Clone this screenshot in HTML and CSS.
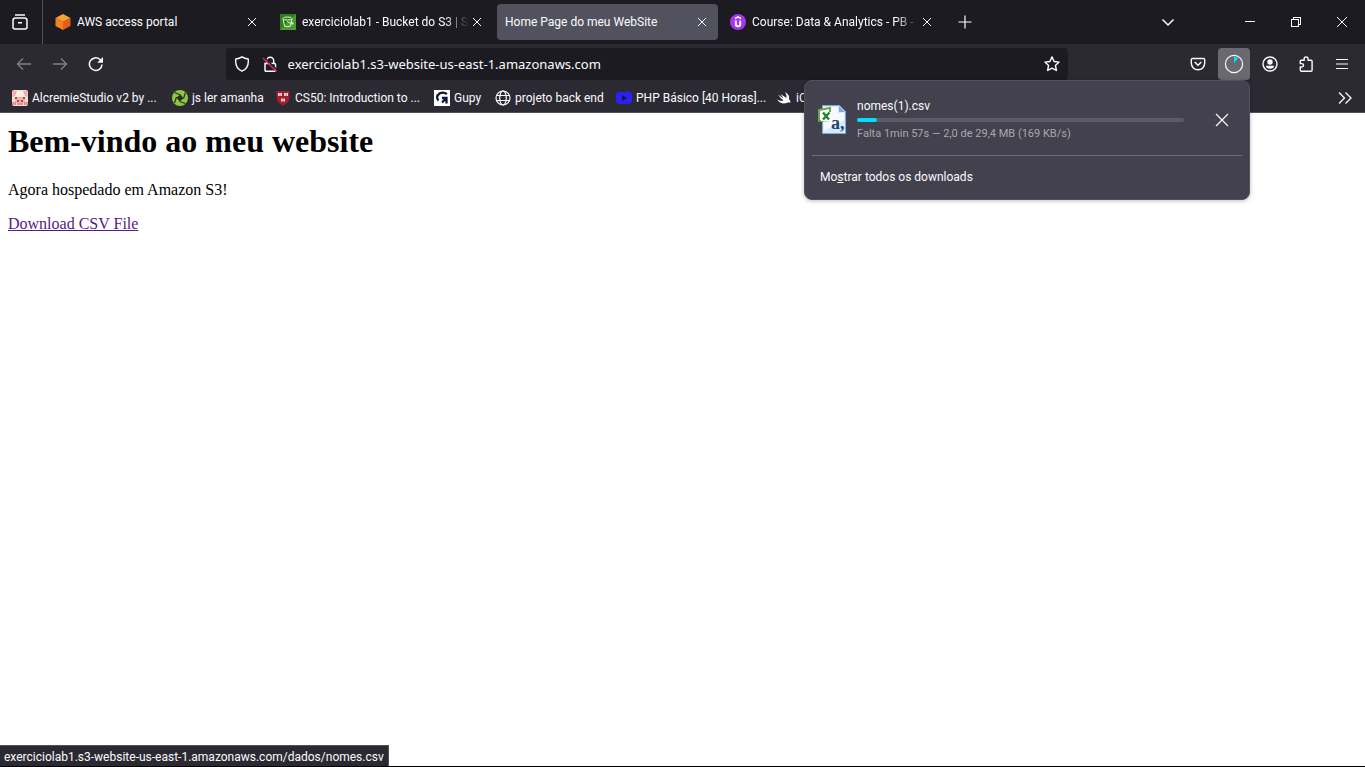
FILE: index.html
```html
<!DOCTYPE html>
<html lang="pt-BR">
<head>
<meta charset="utf-8">
<title>Home Page do meu WebSite</title>
<link rel="stylesheet" href="styles.css">
</head>
<body>
<header class="browser">
  <div class="tabstrip">
    <button class="view-button" aria-label="Firefox View">
      <svg class="icon" width="16" height="16" viewBox="0 0 16 16"><path stroke-width="1.500" d="M3 1h10M3.500 4h9q2.500 0 2.500 2.500V13q0 2-2 2H3q-2 0-2-2V6.500Q1 4 3.500 4zM6 8.700h4"/></svg>
    </button>
    <div class="tabs">
      <div class="tab">
        <button class="tab-label">
          <svg class="favicon" width="16" height="16" viewBox="0 0 16 16"><path fill="#f9a12b" d="m8 0 7.500 4L8 8 .5 4z"/><path fill="#f58220" d="M.5 4 8 8v8L.5 12z"/><path fill="#e65f19" d="M15.500 4 8 8v8l7.500-4z"/></svg>
          <span class="tab-title">AWS access portal</span>
        </button>
        <button class="close" aria-label="Fechar aba"><svg class="icon thin" width="10" height="10" viewBox="0 0 10 10"><path d="m1 1 8 8M9 1 1 9"/></svg></button>
      </div>
      <div class="tab">
        <button class="tab-label">
          <svg class="favicon" width="16" height="16" viewBox="0 0 16 16"><path fill="#2f7d1d" d="M0 0h16v16H0z"/><path fill="#4b9b2c" d="M16 0v16H0z"/><g fill="none" stroke="#e4f3da"><ellipse cx="7.500" cy="4.500" rx="4.500" ry="1.500"/><path d="m3 5 1.500 7q3 1.500 6 0L12 5M7 7.500l5 2.500q2 .5 1-1l-2-1"/></g></svg>
          <span class="tab-title faded">exerciciolab1 - Bucket do S3 | S3</span>
        </button>
        <button class="close" aria-label="Fechar aba"><svg class="icon thin" width="10" height="10" viewBox="0 0 10 10"><path d="m1 1 8 8M9 1 1 9"/></svg></button>
      </div>
      <div class="tab selected">
        <button class="tab-label"><span class="tab-title">Home Page do meu WebSite</span></button>
        <button class="close" aria-label="Fechar aba"><svg class="icon thin" width="10" height="10" viewBox="0 0 10 10"><path d="m1 1 8 8M9 1 1 9"/></svg></button>
      </div>
      <div class="tab">
        <button class="tab-label">
          <svg class="favicon" width="16" height="16" viewBox="0 0 16 16"><circle cx="8" cy="8" r="8" fill="#a435f0"/><path d="M5.800 6.500v4q0 1.800 2.200 1.800t2.200-1.800v-4" fill="none" stroke="#fff" stroke-width="1.900"/><path d="m5 4.700 3-1.800 3 1.800" fill="none" stroke="#fff" stroke-width="1.400"/></svg>
          <span class="tab-title faded">Course: Data &amp; Analytics - PB -</span>
        </button>
        <button class="close" aria-label="Fechar aba"><svg class="icon thin" width="10" height="10" viewBox="0 0 10 10"><path d="m1 1 8 8M9 1 1 9"/></svg></button>
      </div>
      <button class="tool new-tab" aria-label="Nova aba"><svg class="icon" width="14" height="14" viewBox="0 0 14 14"><path d="M7 .5v13M.5 7h13"/></svg></button>
    </div>
    <button class="tool list-tabs" aria-label="Listar abas"><svg class="icon" width="14" height="14" viewBox="0 0 14 14"><path stroke-width="1.500" d="m1.500 4.500 5.500 5.500 5.500-5.500"/></svg></button>
    <div class="window-buttons">
      <button class="window-button" aria-label="Minimizar"><svg class="icon crisp" width="10" height="10" viewBox="0 0 10 10"><path d="M0 4.500h10"/></svg></button>
      <button class="window-button" aria-label="Restaurar"><svg class="icon crisp" width="10" height="10" viewBox="0 0 10 10"><path d="M.5 2.500h7v7h-7zM2.500 2V.5h7v7H8"/></svg></button>
      <button class="window-button" aria-label="Fechar"><svg class="icon thin" width="10" height="10" viewBox="0 0 10 10"><path d="m0 0 10 10M10 0 0 10"/></svg></button>
    </div>
  </div>

  <div class="toolbar">
    <div class="nav">
      <button class="tool" aria-label="Voltar" disabled><svg class="icon" width="16" height="16" viewBox="0 0 16 16"><path stroke-width="1.400" d="M15 8H1.500M7 2.500 1.500 8 7 13.500"/></svg></button>
      <button class="tool" aria-label="Avançar" disabled><svg class="icon" width="16" height="16" viewBox="0 0 16 16"><path stroke-width="1.400" d="M1 8h13.500M9 2.500 14.500 8 9 13.500"/></svg></button>
      <button class="tool" aria-label="Recarregar"><svg class="icon" width="16" height="16" viewBox="0 0 16 16"><path stroke-width="1.500" d="M14 8.500a6.300 6.300 0 1 1-2-5l2 2"/><path fill="#fbfbfe" stroke="none" d="M15 1v5.800H9.200z"/></svg></button>
    </div>
    <div class="spring"></div>
    <div class="urlbar">
      <button class="url-icon" aria-label="Proteção"><svg class="icon" width="16" height="16" viewBox="0 0 16 16"><path stroke-width="1.400" d="M8 .8Q10.500 2.500 14.200 3c.6 5-1 10-6.200 12.200C2.800 13 1.200 8 1.800 3Q5.500 2.500 8 .8z"/></svg></button>
      <button class="url-icon" aria-label="Conexão não segura"><svg class="icon" width="16" height="16" viewBox="0 0 16 16"><path stroke-width="1.500" d="M4.700 7.500V4.700a3.500 3.500 0 0 1 7 0v2.800M3 7.500h9.500q1 0 1 1v5.800q0 1-1 1h-8q-1.500 0-1.500-1z"/><path stroke="#1c1b22" stroke-width="1.600" d="m2.500 1.500 13 13"/><path stroke="#e22850" stroke-width="1.500" d="m1 2 13.500 13.500"/></svg></button>
      <input class="url" type="text" aria-label="Endereço" value="exerciciolab1.s3-website-us-east-1.amazonaws.com">
      <button class="url-icon" aria-label="Adicionar aos favoritos"><svg class="icon" width="16" height="16" viewBox="0 0 16 16"><path stroke-width="1.400" stroke-linejoin="round" d="m8 .9 2.100 4.600 5 .6-3.700 3.400 1 5L8 12.100l-4.400 2.400 1-5L.9 6.100l5-.6z"/></svg></button>
    </div>
    <div class="spring"></div>
    <div class="actions">
      <button class="tool" aria-label="Salvar no Pocket"><svg class="icon" width="16" height="16" viewBox="0 0 16 16"><path stroke-width="1.400" d="M2.500 2.500h11q1.200 0 1.200 1.200V7c0 4-3 6.800-6.700 6.800S1.300 11 1.300 7V3.700q0-1.200 1.200-1.200zM4.700 6 8 9.200 11.300 6"/></svg></button>
      <div class="downloads">
        <button class="tool active" aria-label="Downloads"><svg class="icon" width="20" height="20" viewBox="0 0 20 20"><path fill="#00ddff" stroke="none" d="M10 9.500V2.700q2.500 0 4.200 1.300z"/><circle cx="10" cy="10" r="8.600"/></svg></button>
        <section class="panel" aria-label="Downloads">
          <div class="download">
            <svg class="file-icon" width="32" height="32" viewBox="0 0 32 32"><path fill="#d7e9fb" stroke="#7fa8d8" d="M6.500 1.500h17l6 6v22h-23z"/><path fill="#f6faff" d="M7 3h15v6h6v7L8 27z"/><path fill="#7ca8dc" d="m23 2 6 6h-6z"/><text class="file-letter" x="15" y="25">a,</text><path fill="#fff" stroke="#65a852" stroke-width="2" d="m3 6 11-2v12l-11 1z"/><path fill="#fff" d="M5 8h11v9H5z"/><path fill="none" stroke="#24852c" stroke-width="2.500" d="m7 8.500 6 7M13.500 8.500l-6.500 7"/></svg>
            <div class="details">
              <div class="file-name">nomes(1).csv</div>
              <div class="track"><div class="bar" style="width:6%"></div></div>
              <div class="remaining">Falta 1min 57s — 2,0 de 29,4 MB (169 KB/s)</div>
            </div>
            <button class="tool cancel" aria-label="Cancelar download"><svg class="icon" width="14" height="14" viewBox="0 0 14 14"><path d="m1 1 12 12M13 1 1 13"/></svg></button>
          </div>
          <button class="show-all"><span>Mo<u>s</u>trar todos os downloads</span></button>
        </section>
      </div>
      <button class="tool" aria-label="Conta"><svg class="icon" width="16" height="16" viewBox="0 0 16 16"><circle cx="8" cy="8" r="7" stroke-width="1.400"/><g fill="#fbfbfe" stroke="none"><circle cx="8" cy="6" r="2.700"/><path d="M4 9.800h8q0 3-4 3t-4-3z"/></g></svg></button>
      <button class="tool" aria-label="Extensões"><svg class="icon" width="16" height="16" viewBox="0 0 16 16"><path stroke-width="1.400" d="M3.500 15.200q-1.200 0-1.200-1.200v-3h1.500a1.700 1.700 0 0 0 0-3.400H2.300V5q0-.8.800-.8h3V3a2 2 0 0 1 4 0v1.200h3q1 0 1 1V14q0 1.200-1 1.200z"/></svg></button>
      <button class="tool" aria-label="Menu"><svg class="icon" width="14" height="12" viewBox="0 0 14 12"><path d="M1 1.500h12M1 6h12M1 10.500h12"/></svg></button>
    </div>
  </div>

  <nav class="bookmarks" aria-label="Favoritos">
    <a class="bookmark" href="#alcremie"><svg class="favicon" width="16" height="16" viewBox="0 0 16 16"><rect width="16" height="16" rx="2" fill="#f3dfd0"/><path fill="#f6a9b4" d="M1 1h4L3 6 0 7zM11 1h4l1 6-3-1z"/><path fill="#fbf0dc" d="M5 1h6l2 6H3z"/><path fill="#eeb0b0" d="M3 7h10v6H3z"/><path fill="#d8959b" d="M0 12h4v3H0zM12 12h4v3h-4zM5 13h6v2H5z"/><path fill="#b7434e" d="M3 7h2v2H3zM11 7h2v2h-2zM5 10h2v2H5zM9 10h2v2H9z"/></svg><span>AlcremieStudio v2 by ...</span></a>
    <a class="bookmark" href="#js"><svg class="favicon" width="16" height="16" viewBox="0 0 16 16"><circle cx="8" cy="8" r="8" fill="#8fc93a"/><path d="m8.500 4.500 3 4-4 3-3-4z" fill="#2b2a33"/><path d="M2.500 2.500 8.500 5M13.500 2.500l-2 6M13.500 13.500l-6-2M2.500 13l2-6" stroke="#2b2a33" stroke-width="1.200"/></svg><span>js ler amanha</span></a>
    <a class="bookmark" href="#cs50"><svg class="favicon" width="16" height="16" viewBox="0 0 16 16"><path fill="#a51c30" d="M1.500 1h13v6q0 6-6.500 8.500Q1.500 13 1.500 7z"/><path fill="#e8d9dc" d="M3 3h4v3H3zM9 3h4v3H9zM6 8.500h4v3H6z"/><path stroke="#a51c30" stroke-width=".5" d="M5 3v3M11 3v3M8 8v4"/></svg><span>CS50: Introduction to ...</span></a>
    <a class="bookmark" href="#gupy"><svg class="favicon" width="16" height="16" viewBox="0 0 16 16"><path fill="#fff" d="M0 0h16v16H0z"/><path fill="none" stroke="#10172f" stroke-width="2.300" d="M13 4Q9 1.500 5.500 3.500c-3 2-3 5.500-1 7M8 8h4.500v5.500M12.500 8 8 12.500"/></svg><span>Gupy</span></a>
    <a class="bookmark" href="#projeto"><svg class="favicon icon" width="16" height="16" viewBox="0 0 16 16"><circle cx="8" cy="8" r="7"/><ellipse cx="8" cy="8" rx="3.300" ry="7"/><path d="M1.500 5.500h13M1.500 10.500h13"/></svg><span>projeto back end</span></a>
    <a class="bookmark" href="#php"><svg class="favicon" width="16" height="16" viewBox="0 0 16 16"><path fill="#2a20f5" d="M2 2q1.500-1.500 3 0h6q1.500-1.500 3 0 2 1 2 3v5q0 4-4 4H4q-4 0-4-4V5q0-2 2-3z"/><path fill="#181830" d="m6 5 5 3-5 3z"/></svg><span>PHP Básico [40 Horas]...</span></a>
    <a class="bookmark" href="#ios"><svg class="favicon" width="16" height="16" viewBox="0 0 16 16"><path fill="#fbfbfe" d="M9 2q5 3 4 7 2 2 1.300 4-1.300-1.200-3-.2Q5 15 1 9.500q4 2.200 6.500 1Q4 8 2 4.500L7.500 8.500 4.500 4 10.500 8Q11 5 9 2z"/></svg><span>iOS</span></a>
    <button class="tool overflow" aria-label="Mais favoritos"><svg class="icon" width="14" height="14" viewBox="0 0 14 14"><path stroke-width="1.300" d="m1 1.500 5.500 5.500L1 12.500M7.500 1.500 13 7l-5.500 5.500"/></svg></button>
  </nav>
</header>

<main class="page">
  <h1>Bem-vindo ao meu website</h1>
  <p>Agora hospedado em Amazon S3!</p>
  <a class="download-link" href="#dados/nomes.csv">Download CSV File</a>
</main>
<div class="status">exerciciolab1.s3-website-us-east-1.amazonaws.com/dados/nomes.csv</div>
</body>
</html>
```
FILE: styles.css
```css
* { box-sizing: border-box; }
body {
  margin: 0;
  min-height: 100vh;
  display: flex;
  flex-direction: column;
  background: #fff;
  border-bottom: 1px solid #000;
  overflow: hidden;
  position: relative;
}
button {
  border: 0;
  padding: 0;
  background: none;
  color: inherit;
  font: inherit;
  display: flex;
  align-items: center;
  justify-content: center;
}
svg { display: block; flex: none; }
.browser {
  background: #2b2a33;
  color: #fbfbfe;
  font: 12px/16px Roboto, "Noto Sans", sans-serif;
  border-bottom: 1px solid #52505c;
}
.icon { fill: none; stroke: #fbfbfe; stroke-width: 1.2; }
.thin { stroke-width: 1; }
.crisp { stroke-width: 1; shape-rendering: crispEdges; }

.tabstrip { display: flex; height: 44px; background: #1c1b22; }
.view-button { width: 43px; padding-right: 2px; border-right: 1px solid #52505c; }
.tabs { display: flex; align-items: center; flex: 1; gap: 4px; padding-left: 4px; min-width: 0; }
.tab {
  display: flex;
  align-items: center;
  flex: 0 1 221px;
  min-width: 0;
  height: 36px;
  padding: 0 8px;
  border-radius: 4px;
}
.selected { background: #52525e; }
.tab-label { flex: 1; min-width: 0; gap: 6px; height: 100%; justify-content: flex-start; }
.tab-title { flex: 1; overflow: hidden; white-space: nowrap; text-align: left; }
.faded { mask-image: linear-gradient(to left, transparent, #000 24px); }
.close { width: 16px; height: 24px; }
.tool { width: 32px; height: 32px; border-radius: 4px; flex: none; }
.tool:disabled { opacity: .4; }
.new-tab { margin-left: 2px; }
.list-tabs { align-self: center; margin-right: 43px; }
.window-buttons { display: flex; }
.window-button { width: 46px; }

.toolbar { display: flex; height: 40px; padding: 4px 7px 4px 8px; }
.nav, .actions { display: flex; gap: 4px; }
.spring { flex: 57; }
.urlbar {
  flex: 421;
  display: flex;
  align-items: center;
  border-radius: 4px;
  padding: 0 2px;
  background: #1c1b22;
}
.url-icon { width: 28px; height: 28px; }
.url {
  flex: 1;
  min-width: 0;
  border: 0;
  padding: 0 4px;
  outline: 0;
  background: none;
  color: #fbfbfe;
  font: 13px/20px "Noto Sans", "Open Sans", sans-serif;
}
.active { background: #6a6972; }
.downloads { position: relative; }
.panel {
  position: absolute;
  z-index: 2;
  top: 32px;
  right: 0;
  width: 446px;
  padding: 8px 7px 4px;
  background: #42414d;
  border: 1px solid #52525e;
  border-radius: 8px;
  box-shadow: 0 1px 4px #0004;
}
.download {
  display: flex;
  align-items: center;
  height: 67px;
  padding: 0 4px 5px;
  border-bottom: 1px solid #6f6e78;
}
.file-letter { font: bold 18px "Liberation Serif", serif; fill: #263f70; }
.details { flex: 1; margin: 0 22px 0 9px; }
.track { height: 4px; margin: 4px 0; border-radius: 2px; background: #5b5b66; }
.bar { height: 4px; border-radius: 2px; background: #00ddff; }
.remaining { font-size: 11px; color: #a9a8ae; }
.show-all { height: 36px; margin-top: 3px; padding: 0 8px; }

.bookmarks {
  display: grid;
  grid-template-columns: 160px 103px 159px 61px 121px 160px 1fr 32px;
  height: 28px;
  padding: 0 4px 0 12px;
  align-items: center;
}
.bookmark { display: flex; gap: 4px; color: inherit; text-decoration: none; white-space: nowrap; }
.overflow { height: 24px; }

.page { flex: 1; padding: 10px 8px; font: 16px "Liberation Serif", "Times New Roman", serif; color: #000; }
.page h1 { margin: 0 0 21px; font-size: 32px; }
.page p { margin: 0 0 16px; }
.download-link { color: #551a8b; }
.status {
  position: absolute;
  left: 0;
  bottom: 0;
  padding: 2px 4px 0;
  border: 1px solid #52525e;
  border-width: 1px 1px 0 0;
  background: #2b2a33;
  color: #fbfbfe;
  font: 12px/18px Roboto, "Noto Sans", sans-serif;
}
```
